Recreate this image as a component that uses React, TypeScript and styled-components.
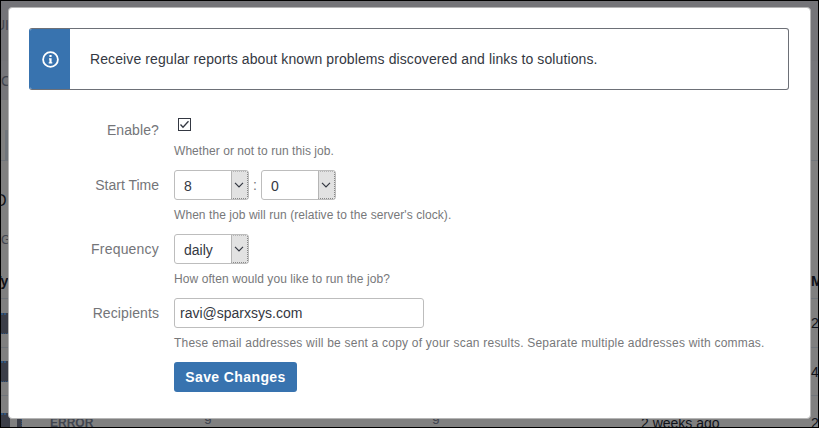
import React from "react";
import styled, { createGlobalStyle } from "styled-components";

const GlobalStyle = createGlobalStyle`
  *, *::before, *::after { box-sizing: border-box; }
  body { margin: 0; overflow: hidden; background: #000; }
  body, button, input, select { font-family: "Liberation Sans", Arial, sans-serif; }
`;

const Screen = styled.div`
  position: relative;
  width: 819px;
  height: 428px;
  overflow: hidden;
  border: 1px solid #000;
  background: #808080;
  color: #30343e;
  font-size: 14px;
`;

const PageRow = styled.div<{ $height: number; $tone?: string; $line?: boolean }>`
  display: flex;
  align-items: center;
  justify-content: space-between;
  height: ${(p) => p.$height}px;
  background: ${(p) => p.$tone ?? "#808080"};
  border-bottom: ${(p) => (p.$line ? "1px solid #70757b" : "none")};
  white-space: nowrap;
`;

const Edge = styled.span<{ $shift?: number; $size?: number; $bold?: boolean; $drop?: number; $lift?: number; $dark?: boolean }>`
  margin-left: ${(p) => p.$shift ?? 0}px;
  padding-top: ${(p) => p.$drop ?? 0}px;
  padding-bottom: ${(p) => p.$lift ?? 0}px;
  font-size: ${(p) => p.$size ?? 14}px;
  font-weight: ${(p) => (p.$bold ? 700 : 400)};
  color: ${(p) => (p.$dark ? "#10131a" : "#41454f")};
`;

const RightEdge = styled(Edge)`
  width: 7px;
`;

const Tab = styled.div`
  align-self: flex-end;
  width: 4px;
  height: 30px;
  margin-left: 4px;
  background: #70757b;
`;

const Avatar = styled.div`
  flex: none;
  width: 9px;
  height: 21px;
  margin-right: auto;
  border-top: 2px dotted #30557d;
  border-bottom: 1px dotted #30557d;
  background: #3b3e48;
`;

const JobRow = styled(PageRow)`
  display: grid;
  grid-template-columns: 16px 33px 154px 228px 209px 170px 7px;
  justify-content: start;
`;

const Marker = styled.div`
  width: 5px;
  height: 21px;
  border-right: 1px dotted #30557d;
  background: #3b3e48;
`;

const Dialog = styled.main`
  position: absolute;
  top: 6px;
  left: 7px;
  width: 803px;
  height: 412px;
  padding: 20px;
  border: 1px solid #b5b5b5;
  border-radius: 4px;
  background: #fff;
`;

const Notice = styled.section`
  display: flex;
  width: 760px;
  height: 62px;
  overflow: hidden;
  border: 1px solid #6d7077;
  border-color: #6d7077 #6d7077 #6d7077 #3873af;
  border-radius: 3px;
  background: #fff;
`;

const NoticeIcon = styled.div`
  display: grid;
  place-items: center;
  width: 40px;
  margin: -1px 0;
  padding-left: 1px;
  background: #3873af;
`;

const NoticeText = styled.p`
  margin: 0;
  padding-left: 20px;
  color: #343842;
  font-size: 14px;
  letter-spacing: 0.1px;
  line-height: 60px;
  white-space: nowrap;
`;

const Form = styled.form`
  display: grid;
  grid-template-columns: 130px 1fr;
  column-gap: 15px;
  padding-top: 25px;
`;

const Label = styled.label<{ $tracking?: number }>`
  padding-top: 6px;
  color: #747579;
  font-size: 14px;
  line-height: 18px;
  letter-spacing: ${(p) => p.$tracking ?? 0}px;
  text-align: right;
`;

const Field = styled.div<{ $height?: number }>`
  height: ${(p) => p.$height ?? 64}px;
`;

const Controls = styled.div<{ $height?: number }>`
  display: flex;
  height: ${(p) => p.$height ?? 30}px;
`;

const Hint = styled.p<{ $tracking?: number }>`
  margin: 0;
  padding-top: 7px;
  color: #77787a;
  font-size: 12px;
  line-height: 16px;
  letter-spacing: ${(p) => p.$tracking ?? 0}px;
  white-space: nowrap;
`;

const Check = styled.span`
  display: block;
  width: 13px;
  height: 13px;
  margin: 3px 0 0 4px;
  border: 1px solid #343842;

  svg { display: block; }
`;

const SelectBox = styled.div`
  display: flex;
  width: 75px;
  height: 30px;
  overflow: hidden;
  border: 1px solid #bdbdbd;
  border-radius: 3px;
  color: #343842;
`;

const SelectValue = styled.span`
  flex: 1;
  padding: 1px 0 0 9px;
  line-height: 28px;
`;

const Arrow = styled.span`
  display: grid;
  place-items: center;
  width: 17px;
  padding-right: 2px;
  border: 1px dotted #888;
  border-left: 1px solid #b5b5b5;
  border-top-color: #b5b5b5;
  background: #e2e2e2;
`;

const Colon = styled.span`
  width: 12px;
  color: #747579;
  line-height: 30px;
  text-align: center;
`;

const TextInput = styled.input`
  width: 250px;
  height: 30px;
  padding: 0 5px;
  border: 1px solid #bdbdbd;
  border-radius: 3px;
  outline: none;
  color: #343842;
  background: #fff;
  font-size: 14px;
`;

const SaveButton = styled.button`
  grid-column: 2;
  width: 123px;
  height: 30px;
  padding: 0;
  border: 0;
  border-radius: 3px;
  background: #3873af;
  color: #fff;
  font-size: 14px;
  font-weight: 700;
  letter-spacing: 0.4px;
`;

function Select({ value }: { value: string }) {
  return (
    <SelectBox>
      <SelectValue>{value}</SelectValue>
      <Arrow>
        <svg width="10" height="6" viewBox="0 0 10 6" fill="none" stroke="#343842" strokeWidth="1.2">
          <path d="M1 .8 5 4.8 9 .8" />
        </svg>
      </Arrow>
    </SelectBox>
  );
}

export default function App() {
  return (
    <>
      <GlobalStyle />
      <Screen>
        <PageRow $height={60} $tone="#747478"><Edge $shift={-6} $lift={12}>UI</Edge></PageRow>
        <PageRow $height={39} $tone="#76767a"><Edge>C</Edge></PageRow>
        <PageRow $height={61} $line><Tab /></PageRow>
        <PageRow $height={59}><Edge $shift={-6} $size={16} $drop={21} $dark>D</Edge></PageRow>
        <PageRow $height={40}><Edge $size={12}>G</Edge></PageRow>
        <PageRow $height={39} $line>
          <Edge $shift={-8} $bold $drop={4} $dark>Ty</Edge>
          <RightEdge $bold $drop={4} $dark>M</RightEdge>
        </PageRow>
        <PageRow $height={49} $line><Avatar /><RightEdge $dark>2</RightEdge></PageRow>
        <PageRow $height={48} $line><Avatar /><RightEdge $dark>4</RightEdge></PageRow>
        <JobRow $height={54}>
          <Avatar />
          <Marker />
          <Edge $bold $size={12}>ERROR</Edge>
          <Edge $lift={14}>g</Edge>
          <Edge $lift={14}>g</Edge>
          <Edge $dark>2 weeks ago</Edge>
          <Edge $dark>2</Edge>
        </JobRow>
        <Dialog>
          <Notice>
            <NoticeIcon>
              <svg width="17" height="17" viewBox="0 0 17 17" fill="none">
                <circle cx="8.5" cy="8.5" r="7.4" stroke="#fff" strokeWidth="1.8" />
                <path d="M7.4 4h2.2v2H7.4zM7 7.2h2.6v4h.7v1.4H6.7v-1.4h.7V8.6H7z" fill="#fff" />
              </svg>
            </NoticeIcon>
            <NoticeText>Receive regular reports about known problems discovered and links to solutions.</NoticeText>
          </Notice>
          <Form onSubmit={(e) => e.preventDefault()}>
            <Label $tracking={0.1}>Enable?</Label>
            <Field $height={55}>
              <Controls $height={21}>
                <Check role="checkbox" aria-checked="true" aria-label="Enable?">
                  <svg width="11" height="11" viewBox="0 0 11 11" fill="none" stroke="#343842" strokeWidth="1.3">
                    <path d="m1.5 5.5 2.5 2.7 5.5-6" />
                  </svg>
                </Check>
              </Controls>
              <Hint $tracking={0.06}>Whether or not to run this job.</Hint>
            </Field>
            <Label>Start Time</Label>
            <Field>
              <Controls>
                <Select value="8" />
                <Colon>:</Colon>
                <Select value="0" />
              </Controls>
              <Hint $tracking={0.065}>When the job will run (relative to the server's clock).</Hint>
            </Field>
            <Label $tracking={0.2}>Frequency</Label>
            <Field>
              <Controls><Select value="daily" /></Controls>
              <Hint $tracking={0.08}>How often would you like to run the job?</Hint>
            </Field>
            <Label htmlFor="recipients" $tracking={0.1}>Recipients</Label>
            <Field>
              <Controls><TextInput id="recipients" defaultValue="ravi@sparxsys.com" /></Controls>
              <Hint $tracking={0.215}>These email addresses will be sent a copy of your scan results. Separate multiple addresses with commas.</Hint>
            </Field>
            <SaveButton>Save Changes</SaveButton>
          </Form>
        </Dialog>
      </Screen>
    </>
  );
}
